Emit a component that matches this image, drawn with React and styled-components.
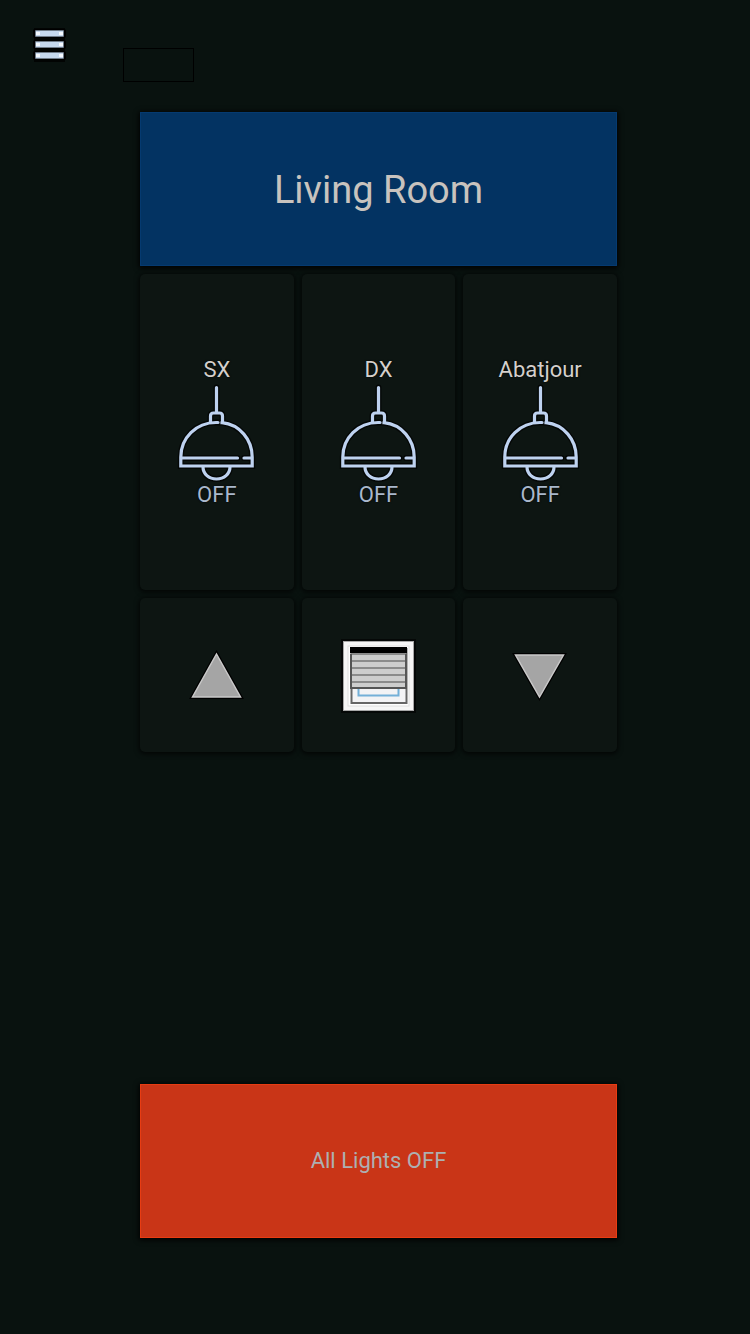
import React from "react";
import styled, { createGlobalStyle } from "styled-components";

const GlobalStyle = createGlobalStyle`
  * { box-sizing: border-box; }
  body {
    margin: 0;
    background: #09120f;
    font-family: Roboto, "Liberation Sans", sans-serif;
  }
  button { font: inherit; color: inherit; border: 0; padding: 0; cursor: pointer; }
  svg { display: block; }
`;

const Page = styled.div`
  min-height: 100vh;
  display: flex;
  flex-direction: column;
  padding-bottom: 96px;
`;

const Header = styled.header`
  display: flex;
  align-items: flex-start;
  height: 112px;
  padding: 28px 32px 0;
  gap: 56px;
`;

const MenuButton = styled.button`
  background: none;
  width: 35px;
  height: 34px;
`;

const StatusBox = styled.div`
  width: 71px;
  height: 34px;
  margin-top: 20px;
  border: 1px solid #000;
`;

const Content = styled.main`
  flex: 1;
  display: flex;
  flex-direction: column;
  gap: 8px;
  padding: 0 133px 0 140px;
`;

const Title = styled.h1`
  display: flex;
  align-items: center;
  justify-content: center;
  height: 154px;
  margin: 0;
  background: #033362;
  color: #c8c3be;
  font-size: 38px;
  font-weight: 400;
  line-height: 44px;
  padding-top: 2px;
  border: 1px solid #053a70;
  box-shadow: 0 1px 5px 1px #000;
`;

const Row = styled.div`
  display: grid;
  grid-template-columns: repeat(3, 1fr);
  gap: 8px;
`;

const Tile = styled.button`
  display: flex;
  flex-direction: column;
  align-items: center;
  justify-content: center;
  height: ${(p) => (p.$tall ? "316px" : "154px")};
  background: #0d1512;
  border-radius: 5px;
  box-shadow: 0 1px 5px 1px rgba(0, 0, 0, 0.75);
`;

const Label = styled.span`
  color: ${(p) => (p.$state ? "#a9b8cc" : "#d4d0cc")};
  font-size: 22px;
  line-height: 28px;
  text-shadow: 0 0 2px #000;
`;

const AllOff = styled.button`
  height: 154px;
  margin-top: auto;
  && {
    background: #c93517;
    color: #adb0b1;
    font-size: 22px;
    padding-bottom: 2px;
    border: 1px solid #e83c12;
  }
  box-shadow: 0 1px 5px 1px #000;
`;

const MenuIcon = () => (
  <svg width="35" height="34" viewBox="0 0 35 34" aria-hidden="true">
    <path d="M2 0H33V34H2Z" fill="#000" opacity=".75" />
    {[2, 13, 24].map((y) => (
      <g key={y}>
        <rect x="1" y={y - 1} width="33" height="9" rx="2" fill="#000" />
        <rect x="3" y={y} width="29" height="7" rx="1" fill="#6f7b88" />
        <rect x="4" y={y + 1} width="27" height="5" fill="#c6d8ee" />
        <path d={`M4 ${y + 2}h4v3h-4zM27 ${y + 2}h4v3h-4z`} fill="#f4f9ff" />
      </g>
    ))}
  </svg>
);

const lampPath =
  "M37.5 1.5V26M31.5 37V30Q31.5 27 34.5 27H40.5Q43.5 27 43.5 30V36M39 36.5H37C17 36.5 1.8 52 1.8 71V80H73.2V71C73.2 54 61 38.5 43 36.7V36M2 72H58.5M65 72H73M24 81C24 88 30 93 37.5 93S51 88 51 81";

const LampIcon = () => (
  <svg width="75" height="97" viewBox="0 -2 75 97" overflow="visible" fill="none" strokeLinecap="round" aria-hidden="true">
    <path d={lampPath} stroke="#000" strokeWidth="6" opacity=".65" />
    <path d={lampPath} stroke="#bed2f0" strokeWidth="3.2" />
  </svg>
);

const ShutterIcon = () => (
  <svg width="71" height="70" viewBox="0 -1 71 70" overflow="visible" aria-hidden="true">
    <rect x="-2" y="-2" width="75" height="74" fill="#000" opacity=".6" />
    <rect width="71" height="70" fill="#a8a8a8" />
    <rect x="1" y="1" width="69" height="68" fill="#f6f6f6" />
    <rect x="5" y="5" width="61" height="60" fill="#fff" stroke="#dedede" />
    <rect x="8.5" y="8" width="55" height="54" fill="#f3f3f5" stroke="#666" strokeWidth="2" />
    <rect x="7" y="6" width="57" height="6" fill="#000" />
    <rect x="8" y="12" width="55" height="35" fill="#cdcdcd" />
    {[13, 20, 27, 34, 41].map((y) => (
      <path key={y} d={`M8 ${y}H63`} stroke="#8b8b8b" strokeWidth="2" />
    ))}
    <path d="M8 13V47H63V13" fill="none" stroke="#555" strokeWidth="2" />
    <path d="M15.5 48V54.5H55.5V48" fill="none" stroke="#74b0d8" strokeWidth="2" />
  </svg>
);

const ArrowIcon = ({ d }) => (
  <svg width="50" height="45" viewBox="0 0 50 45" overflow="visible" aria-hidden="true">
    <path d={d} fill="#000" stroke="#000" strokeWidth="4" />
    <path d={d} fill="#a5a5a5" stroke="#c9c9c9" strokeWidth="1.5" />
  </svg>
);

const Lamp = ({ name }) => (
  <Tile type="button" $tall>
    <Label>{name}</Label>
    <LampIcon />
    <Label $state>OFF</Label>
  </Tile>
);

export default function App() {
  return (
    <Page>
      <GlobalStyle />
      <Header>
        <MenuButton type="button" aria-label="Menu">
          <MenuIcon />
        </MenuButton>
        <StatusBox />
      </Header>
      <Content>
        <Title>Living Room</Title>
        <Row>
          <Lamp name="SX" />
          <Lamp name="DX" />
          <Lamp name="Abatjour" />
        </Row>
        <Row>
          <Tile type="button" aria-label="Shutter up">
            <ArrowIcon d="M24.5 1L48.500 44H.5Z" />
          </Tile>
          <Tile type="button" aria-label="Shutter">
            <ShutterIcon />
          </Tile>
          <Tile type="button" aria-label="Shutter down">
            <ArrowIcon d="M.5 2H48.500L24.500 44Z" />
          </Tile>
        </Row>
        <AllOff type="button">All Lights OFF</AllOff>
      </Content>
    </Page>
  );
}
